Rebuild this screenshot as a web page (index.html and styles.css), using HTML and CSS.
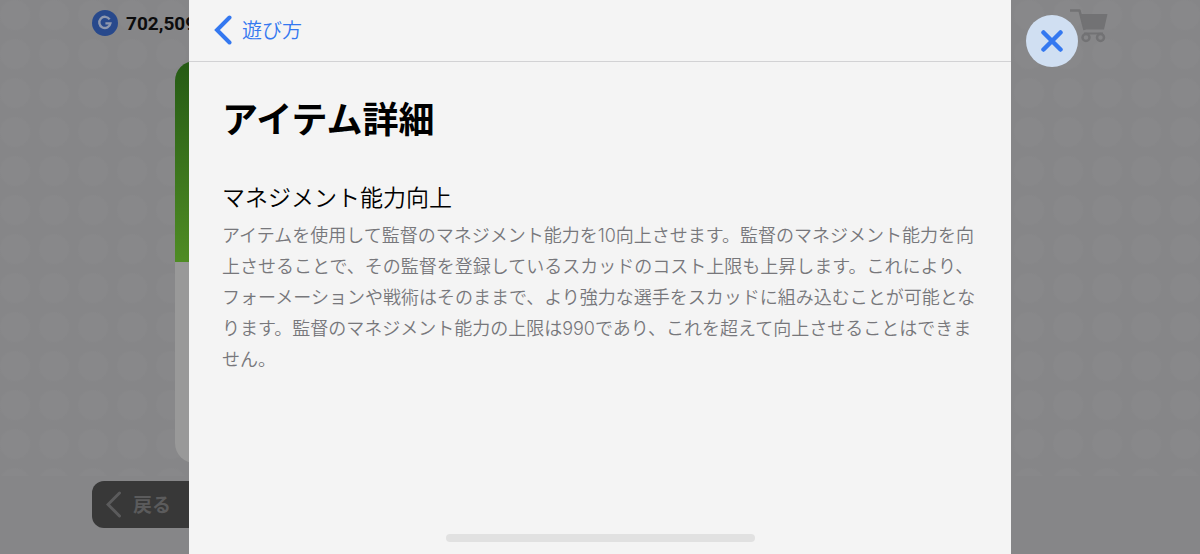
FILE: index.html
```html
<!DOCTYPE html>
<html lang="ja">
<head>
    <meta charset="UTF-8">
    <meta name="viewport" content="width=device-width, initial-scale=1">
    <title>アイテム詳細</title>
    <link rel="stylesheet" href="styles.css">
</head>

<body>

<div class="game">
    <header class="status">
        <div class="coins">
            <svg width="26" height="26" viewBox="0 0 26 26" aria-hidden="true">
                <circle cx="13" cy="13" r="13" fill="#28498c"/>
                <path d="M17.6 9.4A5.6 5.6 0 1 0 18.4 13.4H13.4" fill="none" stroke="#8f98ae" stroke-width="2.4"/>
            </svg>
            <span>702,509</span>
        </div>
        <svg class="cart" width="38" height="34" viewBox="0 0 38 34" aria-hidden="true">
            <path d="M0 1.500H9.500L14.500 21" fill="none" stroke="#727274" stroke-width="2.500" stroke-linejoin="round"/>
            <path d="M10 5H37.500L34 20.500H14Z" fill="#727274"/>
            <path d="M14 24.500H33" stroke="#727274" stroke-width="2"/>
            <circle cx="16" cy="28.500" r="3.500" fill="none" stroke="#727274" stroke-width="2.500"/>
            <circle cx="30.500" cy="28.500" r="3.500" fill="none" stroke="#727274" stroke-width="2.500"/>
        </svg>
    </header>
    <div class="card"></div>
    <button class="return" type="button">
        <svg width="16" height="28" viewBox="0 0 16 28" aria-hidden="true">
            <path d="M13.500 3L2 14.500L13.500 26" fill="none" stroke="#5b5b5c" stroke-width="3" stroke-linecap="round"/>
        </svg>
        <span>戻る</span>
    </button>
</div>

<div class="overlay">
    <main class="sheet">
        <nav class="bar">
            <a class="back" href="#">
                <svg width="18" height="30" viewBox="0 0 18 30" aria-hidden="true">
                    <path d="M15.500 2.500L3 15L15.500 27.500" fill="none" stroke="#3478f0" stroke-width="4" stroke-linecap="round"/>
                </svg>
                <span>遊び方</span>
            </a>
        </nav>
        <article class="content">
            <h1>アイテム詳細</h1>
            <h2>マネジメント能力向上</h2>
            <p>アイテムを使用して監督のマネジメント能力を10向上させます。監督のマネジメント能力を向上させることで、その監督を登録しているスカッドのコスト上限も上昇します。これにより、フォーメーションや戦術はそのままで、より強力な選手をスカッドに組み込むことが可能となります。監督のマネジメント能力の上限は990であり、これを超えて向上させることはできません。</p>
        </article>
        <div class="home"></div>
    </main>
    <button class="close" type="button" aria-label="閉じる">
        <svg width="22" height="22" viewBox="0 0 22 22" aria-hidden="true">
            <path d="M2.500 2.500L19.500 19.500M19.500 2.500L2.500 19.500" stroke="#3478f0" stroke-width="4.500" stroke-linecap="round"/>
        </svg>
    </button>
</div>

</body>
</html>
```
FILE: styles.css
```css
* { box-sizing: border-box; }

body { margin: 0; background: #868688; font-family: Inter, "Noto Sans CJK JP", sans-serif; }
svg  { display: block; flex: none; }
h1, h2, p { margin: 0; }
button { border: 0; font-family: inherit; cursor: pointer; }

/* dimmed game screen */
.game {
    display: flex;
    flex-direction: column;
    height: 100vh;
    overflow: hidden;
    background: radial-gradient(circle at 15px 15px, #88888a 14px, transparent 16px) 0 0 / 39px 39px;
    box-shadow: inset 0 -78px #868688;
}
.status {
    display: flex;
    justify-content: space-between;
    padding: 9px 92px 0;
    height: 61px;
    flex: none;
}
.coins { display: flex; align-items: center; gap: 8px; height: 28px; font: bold 19px Roboto, sans-serif; color: #0c0c0d; }
.card {
    flex: 1;
    margin: 0 190px 0 175px;
    border-radius: 20px;
    background: linear-gradient(#255a14, #4f8c24) 0 0 / 100% 201px no-repeat, #999;
}
.return {
    display: flex;
    align-items: center;
    gap: 11px;
    flex: none;
    width: 200px;
    height: 47px;
    margin: 18px 0 26px 92px;
    padding: 0 14px 2px;
    border-radius: 12px;
    background: #383838;
    color: #5b5b5c;
    font-size: 19px;
    font-weight: bold;
}

/* help sheet */
.overlay { position: absolute; inset: 0; display: flex; align-items: flex-start; padding: 0 0 0 189px; }
.sheet {
    display: flex;
    flex-direction: column;
    flex: 1;
    min-height: 100%;
    background: #f4f4f4;
}
.bar { display: flex; height: 62px; padding: 0 25px 2px; border-bottom: 1px solid #d2d2d4; }
.back { display: flex; align-items: center; gap: 10px; color: #3478f0; font-size: 20px; font-weight: 350; text-decoration: none; }
.content { flex: 1; padding: 32px 28px 32px 33px; }
.content h1 { font-size: 36px; line-height: 52px; }
.content h2 { margin-top: 34px; font-size: 23px; line-height: 36px; font-weight: 350; }
.content p  { margin-top: 4px; font-size: 18px; line-height: 31px; font-weight: 350; color: #77777b; }
.home { align-self: center; width: 309px; height: 8px; margin-bottom: 12px; border-radius: 4px; background: #e1e1e1; }

.close {
    display: flex;
    align-items: center;
    justify-content: center;
    flex: none;
    width: 52px;
    height: 52px;
    margin: 15px 122px 0 15px;
    padding: 0;
    border-radius: 50%;
    background: #d0dff2;
}
```
